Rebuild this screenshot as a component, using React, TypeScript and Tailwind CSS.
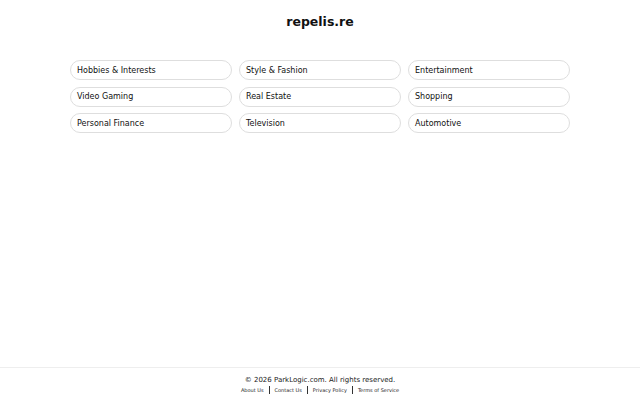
const categories = [
  "Hobbies & Interests",
  "Style & Fashion",
  "Entertainment",
  "Video Gaming",
  "Real Estate",
  "Shopping",
  "Personal Finance",
  "Television",
  "Automotive",
];

const links = ["About Us", "Contact Us", "Privacy Policy", "Terms of Service"];

export default function App() {
  return (
    <div className="flex min-h-screen flex-col bg-white font-['DejaVu_Sans',sans-serif] text-[#111]">
      <main className="flex-1">
        <h1 className="pt-[14px] text-center text-[12.5px] font-bold leading-[16px] text-[#111]">
          repelis.re
        </h1>

        <div className="mx-auto mt-[30px] grid w-[500px] grid-cols-3 gap-x-[7px] gap-y-[6.5px]">
          {categories.map((c) => (
            <a
              key={c}
              href="#"
              className="flex h-[20px] items-center rounded-full border border-[#dedede] px-[6px] pt-[1px] text-[8px] text-[#111]"
            >
              {c}
            </a>
          ))}
        </div>
      </main>

      {/* Footer */}
      <footer className="border-t border-[#eee] pt-[7px] pb-[6px] text-center">
        <p className="text-[7px] leading-[10px] text-[#222]">
          © 2026 ParkLogic.com. All rights reserved.
        </p>
        <div className="mt-[1px] flex items-center justify-center text-[5px] leading-[8px] text-[#222]">
          {links.map((l, i) => (
            <span key={l} className="flex items-center">
              {i > 0 && <span className="mx-[5px] h-[8px] w-px bg-[#333]" />}
              <a href="#">{l}</a>
            </span>
          ))}
        </div>
      </footer>
    </div>
  );
}
